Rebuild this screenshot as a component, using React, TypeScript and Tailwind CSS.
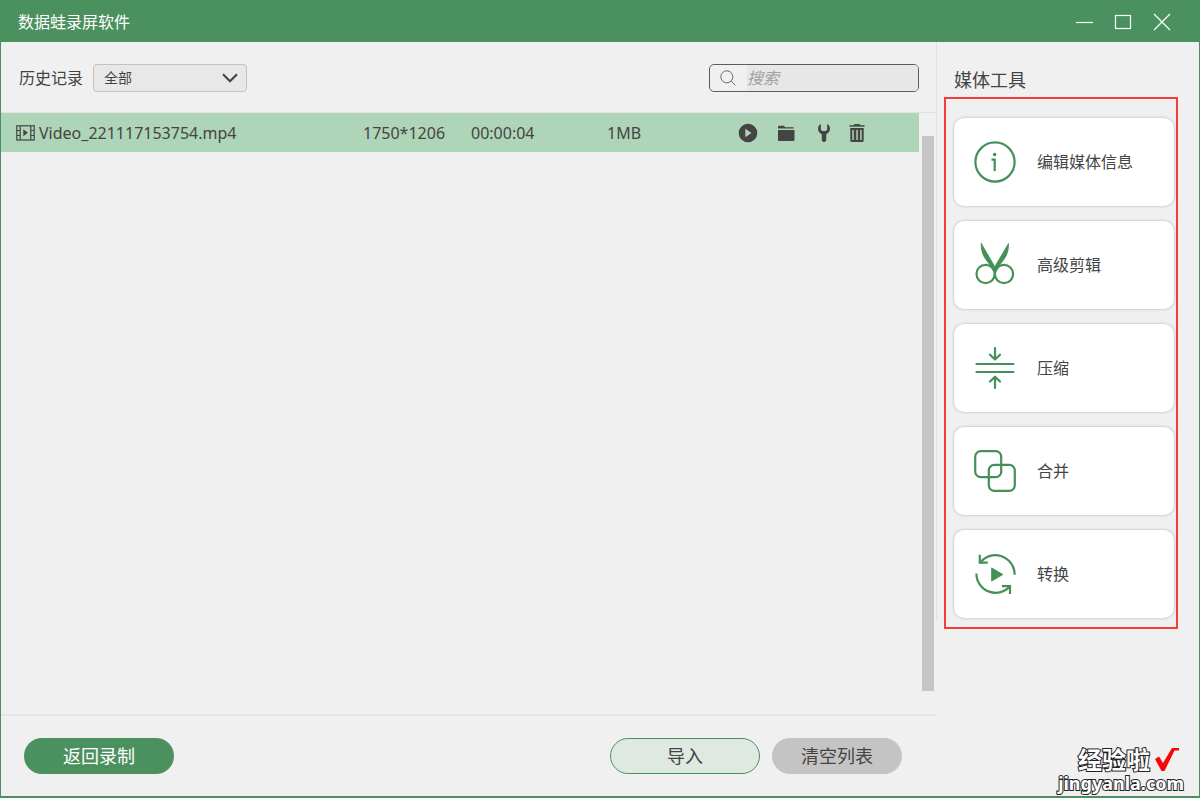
import React from 'react';

interface Tool {
  label: string;
  icon: React.ReactNode;
}

interface Recording {
  name: string;
  resolution: string;
  duration: string;
  size: string;
}

const recordings: Recording[] = [
  { name: 'Video_221117153754.mp4', resolution: '1750*1206', duration: '00:00:04', size: '1MB' },
];

const ToolIcon = ({ children }: { children: React.ReactNode }) => (
  <svg
    width="44"
    height="44"
    viewBox="0 0 44 44"
    fill="none"
    stroke="currentColor"
    strokeWidth="2.2"
    strokeLinecap="round"
    strokeLinejoin="round"
    className="shrink-0 text-[#459058]"
    aria-hidden="true"
  >
    {children}
  </svg>
);

const tools: Tool[] = [
  {
    label: '编辑媒体信息',
    icon: (
      <ToolIcon>
        <circle cx="22" cy="22" r="19.6" />
        <circle cx="21.6" cy="14.5" r="1.8" fill="currentColor" stroke="none" />
        <path d="M18.5 19.6h3.2v11.4" strokeLinecap="butt" strokeLinejoin="miter" />
      </ToolIcon>
    ),
  },
  {
    label: '高级剪辑',
    icon: (
      <ToolIcon>
        <circle cx="12.6" cy="31" r="9.1" />
        <circle cx="31" cy="31" r="9.1" />
        <path
          d="M8.2 .5C8 5 8.8 9 10.7 13C13 17.500 18 22 20.500 28.500H23.200C25.700 22 30.700 17.500 33 13C34.900 9 35.700 5 35.500 .5L21.900 23.500Z"
          fill="currentColor"
          stroke="currentColor"
          strokeWidth="0.8"
        />
      </ToolIcon>
    ),
  },
  {
    label: '压缩',
    icon: (
      <ToolIcon>
        <path d="M3.5 18h37M3.5 26h37M22 2.2v11M17 8.7l5 4.8 5-4.8M22 42v-11M17 35.500l5-4.800 5 4.800" />
      </ToolIcon>
    ),
  },
  {
    label: '合并',
    icon: (
      <ToolIcon>
        <rect x="2.2" y="2.2" width="26" height="26" rx="5.5" />
        <rect x="15.8" y="15.8" width="26" height="26" rx="5.5" />
      </ToolIcon>
    ),
  },
  {
    label: '转换',
    icon: (
      <ToolIcon>
        <path d="M6.8 11.2A19.2 19.2 0 0 1 41.6 22.8M3.4 21.5A19.2 19.2 0 0 0 37.4 33.8" strokeLinecap="butt" />
        <path d="M6.8 2.8v7.9h8M29 34.2h8v7.9" strokeLinejoin="miter" strokeLinecap="butt" />
        <path d="M18.8 16.2v12.6l10.6-6.3z" fill="currentColor" strokeWidth="1.2" />
      </ToolIcon>
    ),
  },
];

const TitleBar = () => (
  <header className="flex h-[42px] shrink-0 items-center justify-between bg-[#4b915f] pt-[2px] pr-7 pl-[18px] text-white">
    <h1 className="text-base">数据蛙录屏软件</h1>
    <div className="flex gap-[19px]">
      <button type="button" aria-label="最小化">
        <svg width="20" height="20" viewBox="0 0 20 20" stroke="currentColor" fill="none">
          <path d="M2 10.5h17" strokeWidth="1.2" />
        </svg>
      </button>
      <button type="button" aria-label="最大化">
        <svg width="20" height="20" viewBox="0 0 20 20" stroke="currentColor" fill="none">
          <rect x="2.5" y="3.5" width="15" height="13" strokeWidth="1.2" />
        </svg>
      </button>
      <button type="button" aria-label="关闭">
        <svg width="20" height="20" viewBox="0 0 20 20" stroke="currentColor" fill="none">
          <path d="M2 2l16 16M18 2L2 18" strokeWidth="1.2" />
        </svg>
      </button>
    </div>
  </header>
);

const Toolbar = () => (
  <div className="flex h-[71px] items-center justify-between border-b border-[#e2e2e2] pt-[2px] pr-[17px] pl-[18px]">
    <div className="flex items-center gap-[10px]">
      <label htmlFor="filtro" className="text-base">历史记录</label>
      <div className="relative">
        <select
          id="filtro"
          className="h-7 w-[154px] appearance-none rounded border border-[#c2c2c2] bg-[#e8e8e8] pl-[10px] text-sm"
        >
          <option>全部</option>
        </select>
        <svg
          width="16"
          height="10"
          viewBox="0 0 16 10"
          fill="none"
          stroke="currentColor"
          strokeWidth="2.2"
          className="pointer-events-none absolute top-[9px] right-[9px]"
          aria-hidden="true"
        >
          <path d="M1 1.2l7 7 7-7" />
        </svg>
      </div>
    </div>
    <div className="flex h-7 w-[210px] items-center overflow-hidden rounded-[5px] border border-[#5c5c5c]">
      <svg
        width="16"
        height="16"
        viewBox="0 0 16 16"
        fill="none"
        stroke="#6b6b6b"
        className="mr-[11px] ml-[10px] shrink-0"
        aria-hidden="true"
      >
        <circle cx="6.8" cy="6.8" r="6" />
        <path d="M11.2 11.2l4.3 4.3" />
      </svg>
      <input
        type="text"
        aria-label="搜索"
        placeholder="搜索"
        className="h-full w-full bg-[#e7e7e7] text-base outline-none placeholder:text-[#a0a0a0] placeholder:italic"
      />
    </div>
  </div>
);

const RecordingRow = ({ name, resolution, duration, size }: Recording) => (
  <tr className="h-[39px] bg-[#aed5b8]">
    <td className="pl-[15px]">
      <div className="flex items-center gap-1">
        <svg width="19" height="16" viewBox="0 0 19 16" fill="none" stroke="currentColor" aria-hidden="true">
          <rect x="0.8" y="0.8" width="17.4" height="14.2" strokeWidth="1.2" />
          <path d="M4.2 1v14M14.8 1v14M1 5.5h3M1 10.5h3M15 5.5h3M15 10.5h3" strokeWidth="1.2" />
          <path d="M7.3 4.3v7l4.6-3.5z" fill="currentColor" stroke="none" />
        </svg>
        {name}
      </div>
    </td>
    <td>{resolution}</td>
    <td>{duration}</td>
    <td>{size}</td>
    <td>
      <div className="flex items-center gap-[18px]">
        <button type="button" aria-label="播放">
          <svg width="20" height="20" viewBox="0 0 20 20" fill="currentColor">
            <path fillRule="evenodd" d="M10 .7a9.3 9.3 0 1 0 0 18.6A9.3 9.3 0 0 0 10 .7zM7.3 5.8l6.2 4.2-6.2 4.2z" />
          </svg>
        </button>
        <button type="button" aria-label="打开文件夹">
          <svg width="20" height="20" viewBox="0 0 20 20" fill="currentColor">
            <path d="M2 3.5q0-.8.8-.8h5l1.5 1.5h8.4v1.4H2zM2 6.9h16.5v10.2q0 .9-.9.9H2.9q-.9 0-.9-.9z" />
          </svg>
        </button>
        <button type="button" aria-label="编辑">
          <svg width="20" height="20" viewBox="0 0 20 20" fill="currentColor">
            <path d="M6.8 1v5.4l1.4 1.600h3.600l1.400-1.600V1c1.800.9 2.800 2.700 2.800 4.800 0 2.500-1.600 4.400-3.800 5.600V17q0 2-2.200 2t-2.200-2v-5.600C5.600 10.200 4 8.300 4 5.800 4 3.700 5 1.900 6.800 1z" />
          </svg>
        </button>
        <button type="button" aria-label="删除" className="-ml-1">
          <svg width="18" height="20" viewBox="0 0 18 20" fill="currentColor">
            <path d="M6 1h6v1.500H6z" />
            <path d="M1.500 2.200h15v1.500h-15z" />
            <path
              fillRule="evenodd"
              d="M2.300 5h13.400v12.600q0 1.500-1.500 1.500H3.800q-1.500 0-1.500-1.500zM4.300 7v10h1.500V7zM8.300 7v10h1.500V7zM12.200 7v10h1.500V7z"
            />
          </svg>
        </button>
      </div>
    </td>
  </tr>
);

const History = () => (
  <main className="flex min-w-0 flex-1 flex-col">
    <Toolbar />
    <div className="flex flex-1 items-start border-b-2 border-[#e6e6e6]">
      <table className="min-w-0 flex-1 table-fixed border-collapse text-left text-base">
        <colgroup>
          <col />
          <col className="w-[108px]" />
          <col className="w-[136px]" />
          <col className="w-[131px]" />
          <col className="w-[181px]" />
        </colgroup>
        <tbody>
          {recordings.map((r) => (
            <RecordingRow key={r.name} {...r} />
          ))}
        </tbody>
      </table>
      {/* Barra de rolagem */}
      <div className="flex self-stretch py-[23px] pr-[2px] pl-[3px]">
        <div className="w-3 bg-[#c6c6c6]" />
      </div>
    </div>
    <footer className="flex h-20 items-center pr-[34px] pl-[23px] text-lg">
      <button type="button" className="h-9 w-[150px] rounded-full bg-[#4b915f] text-white">
        返回录制
      </button>
      <button
        type="button"
        className="ml-auto h-9 w-[150px] rounded-full border border-[#4b915f] bg-[#e0e8e2]"
      >
        导入
      </button>
      <button type="button" className="ml-3 h-9 w-[130px] rounded-full bg-[#c4c4c4]">
        清空列表
      </button>
    </footer>
  </main>
);

const MediaTools = () => (
  <aside className="flex w-[263px] shrink-0 self-start pr-[21px]">
    <div className="mb-2 w-px bg-[#e2e2e2]" />
    <div className="min-w-0 flex-1 pl-[7px]">
      <h2 className="pt-6 pb-[3px] pl-[10px] text-lg leading-7">媒体工具</h2>
      <div className="flex flex-col gap-[15px] border-2 border-[#f83c3c] pt-[19px] pr-[2px] pb-[9px] pl-2">
        {tools.map((tool) => (
          <button
            key={tool.label}
            type="button"
            className="flex h-[88px] items-center gap-5 rounded-[10px] bg-white pl-[19px] text-base shadow-[0_0_3px_rgba(0,0,0,0.28)]"
          >
            {tool.icon}
            {tool.label}
          </button>
        ))}
      </div>
    </div>
  </aside>
);

const Watermark = () => (
  <div className="pointer-events-none absolute right-[16px] bottom-[5px] flex flex-col items-end font-bold text-white [paint-order:stroke_fill] [-webkit-text-stroke:2px_#222]">
    <div className="flex items-center gap-1 pr-1 text-2xl leading-[26px]">
      经验啦
      <svg width="26" height="26" viewBox="0 0 26 26" fill="#fa0505" aria-hidden="true">
        <path d="M1 12l4-2.500 4 6.500L18 1h7v2.500h-4.500L10.500 24H7.500z" />
      </svg>
    </div>
    <div className="text-lg leading-5">jingyanla.com</div>
  </div>
);

const App: React.FC = () => {
  return (
    <div className="relative flex min-h-screen flex-col bg-[#f0f0f0] font-['Noto_Sans','Noto_Sans_CJK_SC',sans-serif] text-[#444]">
      <TitleBar />
      <div className="flex flex-1 border-x border-b-2 border-[#4b915f]">
        <History />
        <MediaTools />
      </div>
      <Watermark />
    </div>
  );
};

export default App;
